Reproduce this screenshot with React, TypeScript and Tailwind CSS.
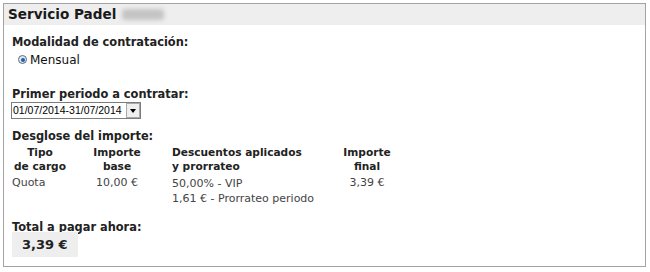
import React from "react";

export default function App() {
  return (
    <div className="w-[650px] h-[272px] bg-white pt-[3px] pl-[3px] font-['DejaVu_Sans',Verdana,sans-serif] text-[#222]">
      <div className="w-[643px] h-[264px] border border-[#a3a3a3] flex flex-col">
        <div className="h-[21px] bg-[#eeeeee] flex items-center pl-[4px] gap-[6px]">
          <span className="text-[13.6px] font-bold leading-none text-[#1a1a1a]">Servicio Padel</span>
          <span className="w-[42px] h-[11px] bg-[#c4c4c4] rounded-[3px] blur-[2px]" />
        </div>
        <div className="pl-[8px] pt-[10px] flex flex-col">
          <div className="text-[11.4px] font-bold leading-[15px]">Modalidad de contratación:</div>
          <div className="flex items-center gap-[3px] pl-[6px] mt-[2px] h-[15px]">
            <span className="w-[9px] h-[9px] rounded-full border border-[#5a6b7c] bg-[#dfe9f3] flex items-center justify-center">
              <span className="w-[4px] h-[4px] rounded-full bg-[#1f5fa8]" />
            </span>
            <span className="text-[12px] leading-none text-[#111]">Mensual</span>
          </div>
          <div className="text-[11.4px] font-bold leading-[15px] mt-[20px]">Primer periodo a contratar:</div>
          <div className="flex items-center h-[17px] w-[130px] border border-[#7c7c7c] bg-white -ml-[1px]">
            <span className="flex-1 pl-[1px] text-[10.5px] whitespace-nowrap leading-none font-['Liberation_Sans',Arial,sans-serif] text-black">01/07/2014-31/07/2014</span>
            <span className="w-[14px] h-[15px] bg-[#efefef] border border-[#a8a8a8] flex items-center justify-center">
              <span className="w-0 h-0 border-l-[3.5px] border-r-[3.5px] border-t-[4px] border-l-transparent border-r-transparent border-t-black" />
            </span>
          </div>
          <div className="text-[11.4px] font-bold leading-[15px] mt-[10px]">Desglose del importe:</div>
          <div className="grid grid-cols-[56px_98px_168px_66px] text-[11px] leading-[14px] mt-[1px]">
            <div className="font-bold text-[10.6px] text-center text-[#222]">Tipo<br />de cargo</div>
            <div className="font-bold text-[10.6px] text-center text-[#222]">Importe<br />base</div>
            <div className="font-bold text-[10.6px] pl-[6px] text-[#222]">Descuentos aplicados<br />y prorrateo</div>
            <div className="font-bold text-[10.6px] text-center text-[#222]">Importe<br />final</div>
            <div className="text-[#444] mt-[3px]">Quota</div>
            <div className="text-[#444] text-center mt-[3px]">10,00 €</div>
            <div className="text-[#444] pl-[6px] mt-[3px] leading-[15px]">50,00% - VIP<br />1,61 € - Prorrateo periodo</div>
            <div className="text-[#444] text-center mt-[3px]">3,39 €</div>
          </div>
          <div className="text-[11.4px] font-bold leading-[15px] mt-[14px]">Total a pagar ahora:</div>
          <div className="w-[66px] h-[25px] bg-[#eeeeee] flex items-center pl-[10px] -mt-[3px]">
            <span className="text-[13px] font-bold leading-none text-[#222]">3,39 €</span>
          </div>
        </div>
      </div>
    </div>
  );
}
